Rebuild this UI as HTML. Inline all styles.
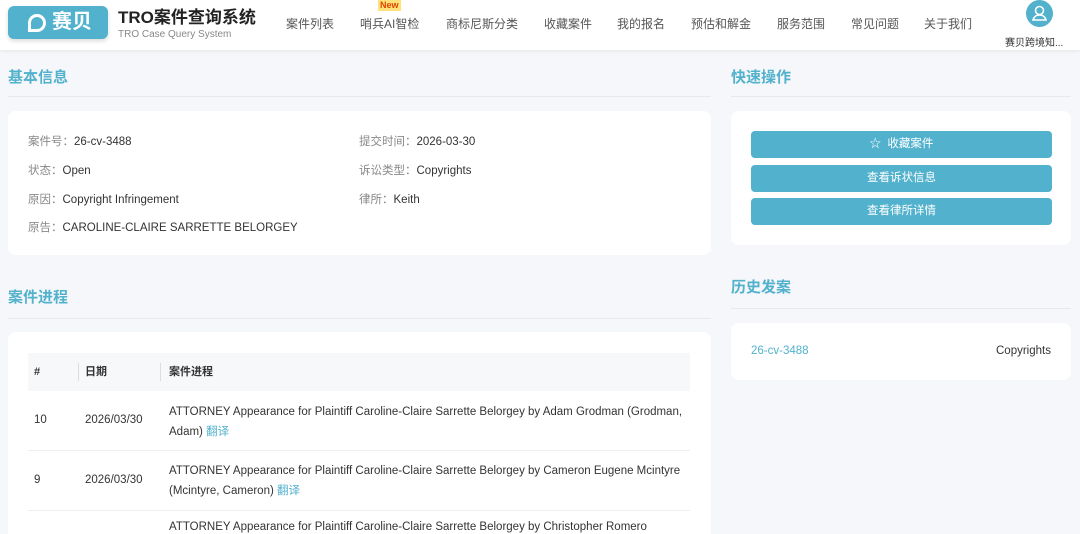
<!DOCTYPE html>
<html><head><meta charset="utf-8"><style>
*{margin:0;padding:0;box-sizing:border-box}
html,body{width:1080px;height:534px;overflow:hidden}
body{background:#f5f7fa;font-family:"Liberation Sans","Noto Sans CJK SC",sans-serif;color:#333;position:relative}
.hd{position:absolute;left:0;top:0;width:1080px;height:50px;background:#fff;box-shadow:0 1px 4px rgba(0,0,0,.08)}
.logo{position:absolute;left:8px;top:6px;width:100px;height:33px;background:#52b1cc;border-radius:6px;color:#fff;font-weight:bold;font-size:20px;line-height:33px;padding-left:44px;box-shadow:0 2px 4px rgba(0,0,0,.15)}
.logo i{position:absolute;left:20px;top:8px;width:18px;height:18px;border:3px solid #fff;border-radius:50% 50% 50% 0}
.t1{position:absolute;left:118px;top:7px;font-size:17px;line-height:22px;font-weight:bold;color:#222}
.t2{position:absolute;left:118px;top:29px;font-size:10px;line-height:12px;color:#888}
.nav{position:absolute;top:15px;font-size:12px;color:#555}
.new{position:absolute;left:378px;top:0;font-size:9px;font-weight:bold;color:#d40;background:#ffe27a;padding:0 2px;line-height:11px}
.av{position:absolute;left:1026px;top:0;width:27px;height:27px;border-radius:50%;background:#52b1cc}
.un{position:absolute;left:1005px;top:34px;font-size:10px;color:#333}
.h{position:absolute;font-size:15px;font-weight:bold;color:#52b1cc}
.ln{position:absolute;height:1px;background:#e6e9ee}
.card{position:absolute;background:#fff;border-radius:8px}
.f{position:absolute;font-size:11.5px;color:#333}
.f b{font-weight:normal;color:#888}
.btn{position:absolute;left:751px;width:301px;height:27px;background:#52b1cc;border-radius:4px;color:#fff;font-size:11.5px;text-align:center;line-height:27px}
.th{position:absolute;left:28px;top:353px;width:662px;height:38px;background:#f7f8fa;font-size:11px;font-weight:bold;line-height:38px}
.row{position:absolute;left:28px;width:662px;border-bottom:1px solid #eceef1;font-size:11.5px}
.c{position:absolute}
.tr{color:#52b1cc}
</style></head><body>
<div class="hd">
<div class="logo"><i></i>赛贝</div>
<div class="t1">TRO案件查询系统</div><div class="t2">TRO Case Query System</div>
<span class="nav" style="left:286px">案件列表</span>
<span class="new">New</span>
<span class="nav" style="left:360px">哨兵AI智检</span>
<span class="nav" style="left:446px">商标尼斯分类</span>
<span class="nav" style="left:544px">收藏案件</span>
<span class="nav" style="left:617px">我的报名</span>
<span class="nav" style="left:691px">预估和解金</span>
<span class="nav" style="left:777px">服务范围</span>
<span class="nav" style="left:851px">常见问题</span>
<span class="nav" style="left:924px">关于我们</span>
<div class="av"><svg width="27" height="27" viewBox="0 0 27 27" fill="none" stroke="#fff" stroke-width="1.6"><circle cx="13.5" cy="10.5" r="4"/><path d="M7 20c1-4 4-5 6.5-5s5.5 1 6.5 5z"/></svg></div>
<div class="un">赛贝跨境知...</div>
</div>

<div class="h" style="left:8px;top:66px">基本信息</div><div class="ln" style="left:8px;top:96px;width:703px"></div>
<div class="card" style="left:8px;top:111px;width:703px;height:144px"></div>
<div class="f" style="left:28px;top:133px"><b>案件号：</b>26-cv-3488</div>
<div class="f" style="left:359px;top:133px"><b>提交时间：</b>2026-03-30</div>
<div class="f" style="left:28px;top:162px"><b>状态：</b>Open</div>
<div class="f" style="left:359px;top:162px"><b>诉讼类型：</b>Copyrights</div>
<div class="f" style="left:28px;top:191px"><b>原因：</b>Copyright Infringement</div>
<div class="f" style="left:359px;top:191px"><b>律所：</b>Keith</div>
<div class="f" style="left:28px;top:219px"><b>原告：</b>CAROLINE-CLAIRE SARRETTE BELORGEY</div>

<div class="h" style="left:8px;top:286px">案件进程</div><div class="ln" style="left:8px;top:318px;width:703px"></div>
<div class="card" style="left:8px;top:332px;width:703px;height:202px;border-radius:8px 8px 0 0"></div>
<div class="th"><span class="c" style="left:6px">#</span><span class="c" style="left:50px;top:10px;height:18px;width:1px;background:#ddd"></span><span class="c" style="left:57px">日期</span><span class="c" style="left:132px;top:10px;height:18px;width:1px;background:#ddd"></span><span class="c" style="left:141px">案件进程</span></div>
<div class="row" style="top:391px;height:60px"><span class="c" style="left:6px;top:23px">10</span><span class="c" style="left:57px;top:23px">2026/03/30</span><span class="c" style="left:141px;top:11px;width:520px;line-height:20px">ATTORNEY Appearance for Plaintiff Caroline-Claire Sarrette Belorgey by Adam Grodman (Grodman, Adam) <span class="tr">翻译</span></span></div>
<div class="row" style="top:451px;height:60px"><span class="c" style="left:6px;top:23px">9</span><span class="c" style="left:57px;top:23px">2026/03/30</span><span class="c" style="left:141px;top:10px;width:520px;line-height:20px">ATTORNEY Appearance for Plaintiff Caroline-Claire Sarrette Belorgey by Cameron Eugene Mcintyre (Mcintyre, Cameron) <span class="tr">翻译</span></span></div>
<div class="row" style="top:511px;height:23px;border:none;overflow:hidden"><span class="c" style="left:141px;top:10px;width:520px;white-space:nowrap">ATTORNEY Appearance for Plaintiff Caroline-Claire Sarrette Belorgey by Christopher Romero</span></div>

<div class="h" style="left:731px;top:66px">快速操作</div><div class="ln" style="left:731px;top:96px;width:340px"></div>
<div class="card" style="left:731px;top:111px;width:340px;height:134px"></div>
<div class="btn" style="top:131px">☆&nbsp; 收藏案件</div>
<div class="btn" style="top:165px">查看诉状信息</div>
<div class="btn" style="top:198px">查看律所详情</div>
<div class="h" style="left:731px;top:276px">历史发案</div><div class="ln" style="left:731px;top:308px;width:340px"></div>
<div class="card" style="left:731px;top:323px;width:340px;height:57px"></div>
<div class="f" style="left:751px;top:345px;color:#52b1cc">26-cv-3488</div>
<div class="f" style="left:996px;top:345px">Copyrights</div>
</body></html>
